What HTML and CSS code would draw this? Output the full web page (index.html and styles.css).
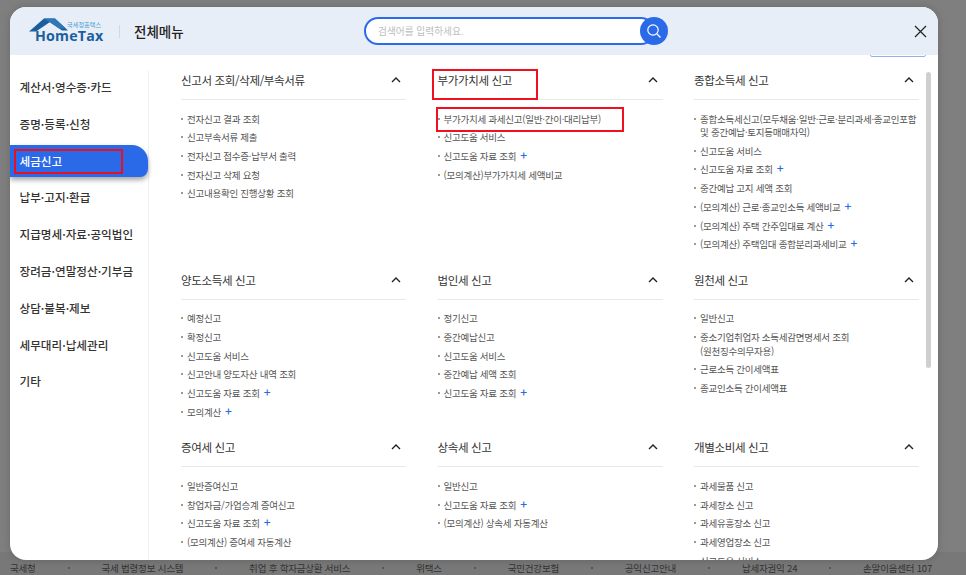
FILE: index.html
```html
<!DOCTYPE html>
<html lang="ko">
<head>
<meta charset="utf-8">
<title>전체메뉴</title>
<link rel="stylesheet" href="styles.css">
</head>
<body>
<div class="page">
  <footer class="links">
    <span>국세청</span><i></i><span>국세 법령정보 시스템</span><i></i><span>취업 후 학자금상환 서비스</span><i></i><span>위택스</span><i></i><span>국민건강보험</span><i></i><span>공익신고안내</span><i></i><span>납세자권익 24</span><i></i><span>손말이음센터 107</span>
  </footer>
</div>
<div class="modal">
  <header class="head">
    <div class="logo">
      <svg class="roof" width="40" height="16" viewBox="0 0 40 16"><path d="M0 13.5 L15 0.5 H26 L39 12.5 H33 L21 4 L7 13.5 Z" fill="#1b5e9e"/><path d="M15 0.5 H26 L37 10.5 L30 10.5 Z" fill="#2f78b8"/></svg>
      <span class="logo-ko">국세청홈택스</span>
      <span class="logo-en">HomeTax</span>
    </div>
    <span class="divider"></span>
    <h1 class="title">전체메뉴</h1>
    <div class="search">
      <span class="placeholder">검색어를 입력하세요.</span>
      <button class="search-btn" aria-label="검색"><svg width="16" height="16" viewBox="0 0 16 16" fill="none" stroke="#fff" stroke-width="1.2"><circle cx="7" cy="7" r="5.2"/><path d="M11 11 L14.5 14.5"/></svg></button>
    </div>
    <svg class="close" width="13" height="13" viewBox="0 0 13 13" fill="none" stroke="#222" stroke-width="1.2"><path d="M1 1 L12 12 M12 1 L1 12"/></svg>
  </header>
  <span class="peek"></span>
  <div class="body">
    <nav class="side">
      <a>계산서·영수증·카드</a>
      <a>증명·등록·신청</a>
      <a class="active marked">세금신고</a>
      <a>납부·고지·환급</a>
      <a>지급명세·자료·공익법인</a>
      <a>장려금·연말정산·기부금</a>
      <a>상담·불복·제보</a>
      <a>세무대리·납세관리</a>
      <a>기타</a>
    </nav>
    <main class="grid">
      <section class="group">
        <div class="ghead"><h2>신고서 조회/삭제/부속서류</h2><svg class="chev" width="10" height="6" viewBox="0 0 10 6"><path d="M1 5 L5 1 L9 5"/></svg></div>
        <ul>
          <li>전자신고 결과 조회</li>
          <li>신고부속서류 제출</li>
          <li>전자신고 접수증·납부서 출력</li>
          <li>전자신고 삭제 요청</li>
          <li>신고내용확인 진행상황 조회</li>
        </ul>
      </section>
      <section class="group">
        <div class="ghead marked-title"><h2>부가가치세 신고</h2><svg class="chev" width="10" height="6" viewBox="0 0 10 6"><path d="M1 5 L5 1 L9 5"/></svg></div>
        <ul>
          <li class="marked-item">부가가치세 과세신고(일반·간이·대리납부)</li>
          <li>신고도움 서비스</li>
          <li><span>신고도움 자료 조회<b>+</b></span></li>
          <li>(모의계산)부가가치세 세액비교</li>
        </ul>
      </section>
      <section class="group">
        <div class="ghead"><h2>종합소득세 신고</h2><svg class="chev" width="10" height="6" viewBox="0 0 10 6"><path d="M1 5 L5 1 L9 5"/></svg></div>
        <ul>
          <li><span>종합소득세신고(모두채움·일반·근로·분리과세·종교인포함<br>및 중간예납·토지등매매차익)</span></li>
          <li>신고도움 서비스</li>
          <li><span>신고도움 자료 조회<b>+</b></span></li>
          <li>중간예납 고지 세액 조회</li>
          <li><span>(모의계산) 근로·종교인소득 세액비교<b>+</b></span></li>
          <li><span>(모의계산) 주택 간주임대료 계산<b>+</b></span></li>
          <li><span>(모의계산) 주택임대 종합분리과세비교<b>+</b></span></li>
        </ul>
      </section>
      <section class="group">
        <div class="ghead"><h2>양도소득세 신고</h2><svg class="chev" width="10" height="6" viewBox="0 0 10 6"><path d="M1 5 L5 1 L9 5"/></svg></div>
        <ul>
          <li>예정신고</li>
          <li>확정신고</li>
          <li>신고도움 서비스</li>
          <li>신고안내 양도자산 내역 조회</li>
          <li><span>신고도움 자료 조회<b>+</b></span></li>
          <li><span>모의계산<b>+</b></span></li>
        </ul>
      </section>
      <section class="group">
        <div class="ghead"><h2>법인세 신고</h2><svg class="chev" width="10" height="6" viewBox="0 0 10 6"><path d="M1 5 L5 1 L9 5"/></svg></div>
        <ul>
          <li>정기신고</li>
          <li>중간예납신고</li>
          <li>신고도움 서비스</li>
          <li>중간예납 세액 조회</li>
          <li><span>신고도움 자료 조회<b>+</b></span></li>
        </ul>
      </section>
      <section class="group">
        <div class="ghead"><h2>원천세 신고</h2><svg class="chev" width="10" height="6" viewBox="0 0 10 6"><path d="M1 5 L5 1 L9 5"/></svg></div>
        <ul>
          <li>일반신고</li>
          <li><span>중소기업취업자 소득세감면명세서 조회<br>(원천징수의무자용)</span></li>
          <li>근로소득 간이세액표</li>
          <li>종교인소득 간이세액표</li>
        </ul>
      </section>
      <section class="group">
        <div class="ghead"><h2>증여세 신고</h2><svg class="chev" width="10" height="6" viewBox="0 0 10 6"><path d="M1 5 L5 1 L9 5"/></svg></div>
        <ul>
          <li>일반증여신고</li>
          <li>창업자금/가업승계 증여신고</li>
          <li><span>신고도움 자료 조회<b>+</b></span></li>
          <li>(모의계산) 증여세 자동계산</li>
        </ul>
      </section>
      <section class="group">
        <div class="ghead"><h2>상속세 신고</h2><svg class="chev" width="10" height="6" viewBox="0 0 10 6"><path d="M1 5 L5 1 L9 5"/></svg></div>
        <ul>
          <li>일반신고</li>
          <li><span>신고도움 자료 조회<b>+</b></span></li>
          <li>(모의계산) 상속세 자동계산</li>
        </ul>
      </section>
      <section class="group">
        <div class="ghead"><h2>개별소비세 신고</h2><svg class="chev" width="10" height="6" viewBox="0 0 10 6"><path d="M1 5 L5 1 L9 5"/></svg></div>
        <ul>
          <li>과세물품 신고</li>
          <li>과세장소 신고</li>
          <li>과세유흥장소 신고</li>
          <li>과세영업장소 신고</li>
          <li>신고도움 서비스</li>
        </ul>
      </section>
    </main>
    <span class="scrollbar"></span>
  </div>
</div>
</body>
</html>
```
FILE: styles.css
```css
*, *::before, *::after { box-sizing: border-box; }
html, body { margin: 0; height: 100%; }
body {
  background: #7f7f7f;
  font-family: "Noto Sans CJK KR", "Noto Sans", sans-serif;
  overflow: hidden;
}
.page { height: 575px; display: flex; flex-direction: column; justify-content: flex-end; }
.links {
  height: 23px;
  padding: 9px 34px 0 10px;
  background: #787878;
  display: flex;
  justify-content: space-between;
  align-items: center;
  font-size: 9.5px;
  letter-spacing: -.2px;
  color: #333;
}
.links i { width: 2px; height: 2px; background: #555; }
.modal {
  position: absolute;
  left: 10px;
  top: 7px;
  width: 928px;
  height: 553px;
  background: #fff;
  border-radius: 16px;
  overflow: hidden;
  box-shadow: 0 0 8px rgba(0, 0, 0, .18);
  display: flex;
  flex-direction: column;
}
.head {
  height: 48px;
  flex: none;
  background: #e8eef8;
  position: relative;
  z-index: 2;
  display: flex;
  align-items: center;
  padding-left: 19px;
}
.logo { width: 75px; height: 28px; position: relative; flex: none; margin-top: 1px; }
.roof { position: absolute; left: 0; top: 0; }
.logo-ko { position: absolute; left: 38px; top: 2.5px; font-size: 6.2px; line-height: 9px; color: #4a9ed2; white-space: nowrap; }
.logo-en { position: absolute; left: 6px; top: 8px; font-family: "Open Sans", sans-serif; font-size: 14.2px; line-height: 20px; font-weight: 700; color: #1b5e9e; letter-spacing: .2px; white-space: nowrap; }
.divider { width: 1px; height: 13px; background: #d3d8e0; margin: 0 14px 0 15px; flex: none; }
.title { margin: 0; font-size: 13.5px; font-weight: 500; color: #222; width: 50px; white-space: nowrap; }
.search {
  margin-left: 180px;
  width: 291px;
  height: 28px;
  background: #fff;
  border: 2px solid #2a6ae9;
  border-radius: 14px;
  display: flex;
  align-items: center;
  padding-left: 12px;
  position: relative;
}
.placeholder { font-size: 9.7px; color: #bdbdbd; }
.search-btn {
  position: absolute;
  right: -15px;
  top: -2px;
  width: 28px;
  height: 28px;
  border: 0;
  border-radius: 50%;
  padding: 0;
  background: #2a6ae9;
  display: flex;
  align-items: center;
  justify-content: center;
}
.close { position: absolute; right: 11px; top: 18px; }
.peek {
  position: absolute;
  left: 860px;
  top: 44px;
  width: 56px;
  height: 6px;
  border: 1px solid #8fb0ee;
  border-radius: 2px;
  z-index: 1;
}
.body { flex: 1; min-height: 0; display: flex; padding-top: 16px; position: relative; overflow: hidden; }
.side {
  width: 139px;
  flex: none;
  border-right: 1px solid #eceef8;
  display: flex;
  flex-direction: column;
  gap: 4.8px;
  margin-bottom: -40px;
}
.side a {
  height: 32px;
  flex: none;
  display: flex;
  align-items: center;
  padding-left: 9.5px;
  font-size: 11.6px;
  font-weight: 500;
  color: #333;
  white-space: nowrap;
  position: relative;
}
.side a.active {
  width: 138px;
  background: #2a6ae9;
  color: #fff;
  border-radius: 0 16px 8px 0;
  box-shadow: 0 3px 5px rgba(0, 0, 0, .35);
}
.marked::after {
  content: "";
  position: absolute;
  left: 4px;
  top: 4px;
  width: 109px;
  height: 25px;
  border: 2px solid #e8101c;
}
.grid {
  padding-left: 32px;
  display: grid;
  grid-template-columns: repeat(3, 225px);
  column-gap: 31.5px;
  row-gap: 16.5px;
  align-content: start;
}
.ghead {
  height: 29px;
  border-bottom: 1px solid #e6e8ec;
  display: flex;
  justify-content: space-between;
  padding: 0 5px 0 0;
  position: relative;
}
.ghead h2 { margin: 0; font-size: 11.5px; font-weight: 400; letter-spacing: -.35px; line-height: 18px; color: #333; }
.chev { margin-top: 6px; fill: none; stroke: #222; stroke-width: 1.4; }
.marked-title::after {
  content: "";
  position: absolute;
  left: -6px;
  top: -2px;
  width: 106px;
  height: 31px;
  border: 2px solid #f01020;
}
.group ul { list-style: none; margin: 10px 0 0; padding: 0; }
.group li {
  display: flex;
  gap: 4px;
  padding: 2.6px 0;
  font-size: 9.5px;
  letter-spacing: -.25px;
  line-height: 13.5px;
  color: #555;
  position: relative;
}
.group li::before {
  content: "";
  width: 2px;
  height: 2px;
  margin-top: 5px;
  background: #999;
  flex: none;
}
.group li b { color: #2a6ae9; font-weight: 500; font-size: 12px; line-height: 1px; margin-left: 4px; }
.marked-item::after {
  content: "";
  position: absolute;
  left: -2px;
  top: -3px;
  width: 188px;
  height: 25px;
  border: 2px solid #f01020;
}
.scrollbar {
  position: absolute;
  left: 916px;
  top: 17px;
  width: 5px;
  height: 296px;
  background: #cfcfcf;
  border-radius: 3px;
}
```
